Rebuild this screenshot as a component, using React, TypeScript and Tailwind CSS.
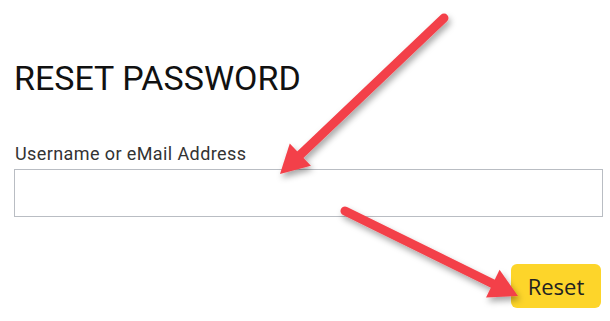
import React from 'react';

const Arrow: React.FC<{ x1: number; y1: number; x2: number; y2: number }> = ({ x1, y1, x2, y2 }) => {
  const ang = Math.atan2(y2 - y1, x2 - x1);
  const len = 32;
  const spread = 0.5;
  const bx = x2 - len * 0.75 * Math.cos(ang);
  const by = y2 - len * 0.75 * Math.sin(ang);
  const p1 = [x2 - len * Math.cos(ang - spread), y2 - len * Math.sin(ang - spread)];
  const p2 = [x2 - len * Math.cos(ang + spread), y2 - len * Math.sin(ang + spread)];
  return (
    <g>
      <line x1={x1} y1={y1} x2={bx} y2={by} stroke="#f3414a" strokeWidth="9" strokeLinecap="round" />
      <polygon points={`${x2},${y2} ${p1[0]},${p1[1]} ${p2[0]},${p2[1]}`} fill="#f3414a" />
    </g>
  );
};

const App: React.FC = () => {
  return (
    <div
      className="relative w-[610px] h-[321px] bg-white overflow-hidden"
      style={{ fontFamily: 'Roboto, "Liberation Sans", sans-serif' }}
    >
      <div className="pt-[61px] pl-[14px] pr-[7px]">
        <h1 className="text-[34px] leading-[34px] text-[#111] font-normal">RESET PASSWORD</h1>

        <label className="block mt-[47px] pl-[1px] text-[18px] leading-6 tracking-[0.4px] text-[#333]">
          Username or eMail Address
        </label>
        <input
          type="text"
          className="block mt-[3px] w-full h-[48px] border border-[#b9bdc3] bg-white outline-none"
        />

        <div className="flex justify-end mt-[47px] pr-[2px]">
          <button
            className="h-[44px] w-[90px] rounded-md bg-[#fdd52a] text-[22px] text-[#222]"
            style={{ fontFamily: '"Open Sans", "Liberation Sans", sans-serif' }}
          >
            Reset
          </button>
        </div>
      </div>

      {/* annotation arrows */}
      <svg className="absolute inset-0 pointer-events-none" width="610" height="321" viewBox="0 0 610 321">
        <defs>
          <filter id="sh" x="-20%" y="-20%" width="140%" height="140%">
            <feDropShadow dx="2" dy="4" stdDeviation="3" floodColor="#000" floodOpacity="0.35" />
          </filter>
        </defs>
        <g filter="url(#sh)">
          <Arrow x1={444} y1={18} x2={280} y2={174} />
          <Arrow x1={345} y1={211} x2={518} y2={296} />
        </g>
      </svg>
    </div>
  );
};

export default App;
